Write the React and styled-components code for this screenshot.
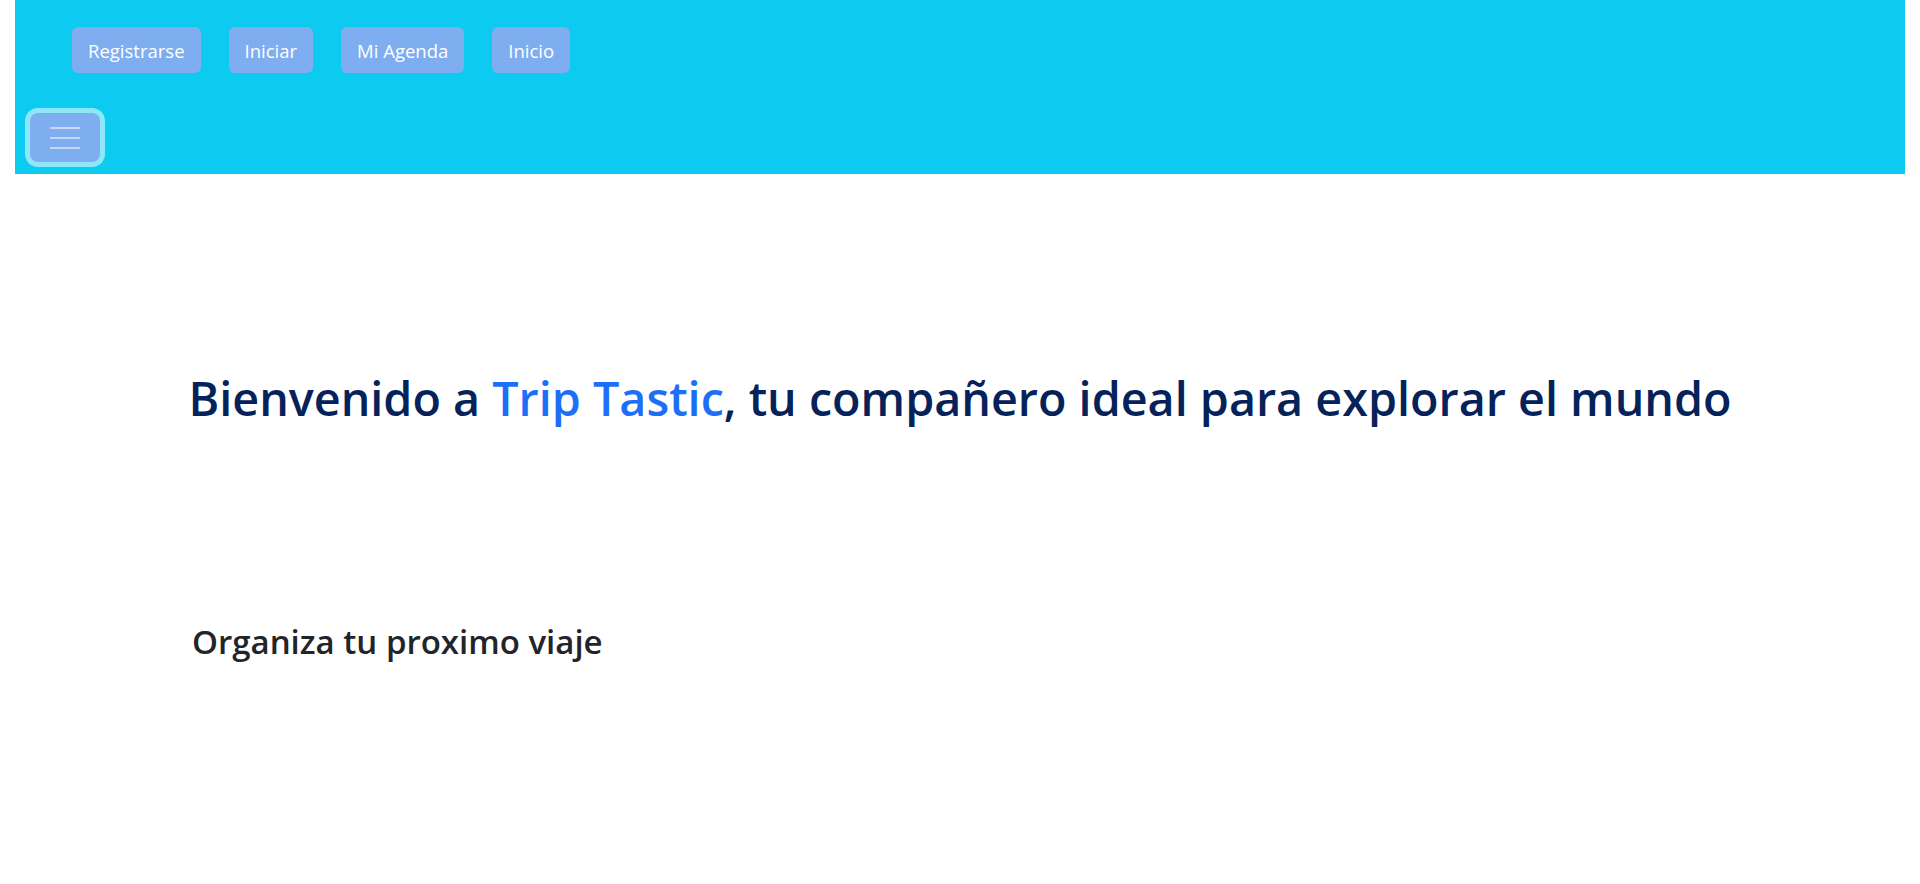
import React from 'react';
import styled, { createGlobalStyle } from 'styled-components';

const GlobalStyle = createGlobalStyle`
  body {
    margin: 0;
    background: #ffffff;
    font-family: "Open Sans", "Noto Sans", sans-serif;
  }
`;

const links = ['Registrarse', 'Iniciar', 'Mi Agenda', 'Inicio'];

function App() {
  return (
    <Page>
      <GlobalStyle />
      <Navbar>
        <LinkRow>
          {links.map((label) => (
            <NavButton key={label}>{label}</NavButton>
          ))}
        </LinkRow>
        <Toggler aria-label="menu">
          <ToggleIcon width="30" height="22" viewBox="0 0 30 22">
            <line x1="0" y1="1" x2="30" y2="1" />
            <line x1="0" y1="11" x2="30" y2="11" />
            <line x1="0" y1="21" x2="30" y2="21" />
          </ToggleIcon>
        </Toggler>
      </Navbar>

      <Main>
        <Title>
          Bienvenido a <Brand>Trip Tastic</Brand>, tu compañero ideal para explorar el mundo
        </Title>
        <Subtitle>Organiza tu proximo viaje</Subtitle>
      </Main>
    </Page>
  );
}

export default App;

const Page = styled.div`
  padding: 0 15px;
`;

const Navbar = styled.nav`
  display: flex;
  flex-direction: column;
  align-items: flex-start;

  background-color: #0dcaf0;
  height: 174px;
  box-sizing: border-box;
  padding: 27px 0 0 0;
`;

const LinkRow = styled.div`
  display: flex;
  flex-direction: row;
  gap: 28px;

  padding-left: 57px;
`;

const NavButton = styled.a`
  display: flex;
  align-items: center;

  height: 46px;
  padding: 0 16px;
  box-sizing: border-box;

  background-color: #7eaef0;
  border-radius: 6px;

  color: #ffffff;
  font-size: 18.5px;
  text-decoration: none;
  cursor: pointer;
`;

const Toggler = styled.button`
  display: flex;
  justify-content: center;
  align-items: center;

  width: 70px;
  height: 49px;
  margin: 40px 0 0 15px;
  padding: 0;

  background-color: #7eaef0;
  border: none;
  border-radius: 8px;
  box-shadow: 0 0 0 5px #8ee7f8;
`;

const ToggleIcon = styled.svg`
  stroke: #c6d8f7;
  stroke-width: 2;
`;

const Main = styled.main`
  display: flex;
  flex-direction: column;
  padding: 196px 0 0 0;
`;

const Title = styled.h1`
  margin: 0;
  text-align: center;

  color: #05235a;
  font-size: 46.7px;
  font-weight: 600;
  line-height: 1.2;
`;

const Brand = styled.span`
  color: #1d6ff7;
`;

const Subtitle = styled.h3`
  margin: 196px 0 0 177px;

  color: #212529;
  font-size: 33px;
  font-weight: 600;
  line-height: 1.2;
`;
